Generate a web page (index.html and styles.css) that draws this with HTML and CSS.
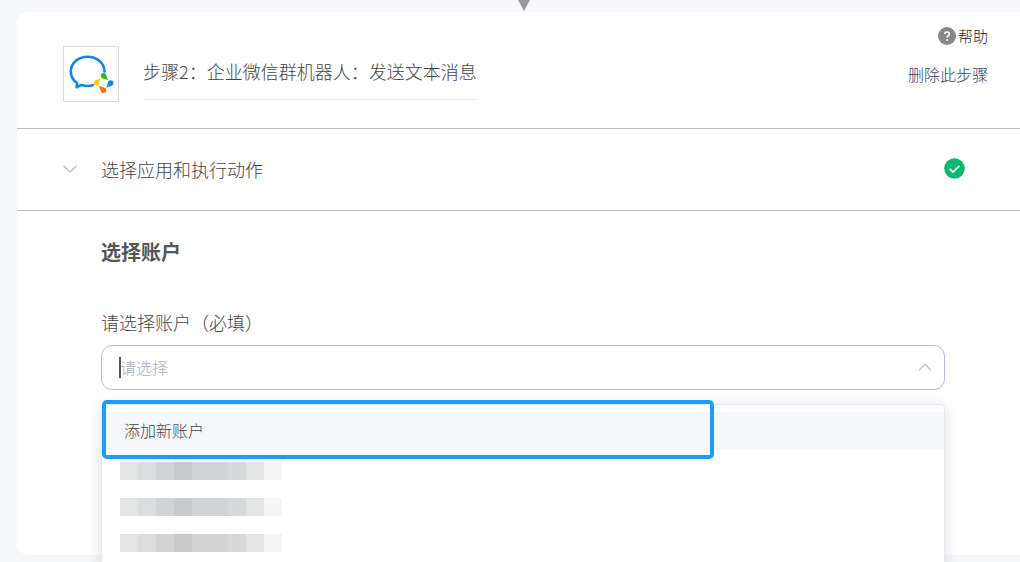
FILE: index.html
```html
<!DOCTYPE html>
<html lang="zh-CN">

<head>
    <meta charset="UTF-8">
    <meta name="viewport" content="width=device-width, initial-scale=1.0">
    <title>选择账户</title>
    <link rel="stylesheet" href="styles.css">
</head>

<body>
    <div class="connector">
        <svg width="14" height="12" viewBox="0 0 14 12">
            <path d="M0 -2H14L7 11Z" fill="#999" />
        </svg>
    </div>
    <main class="step-card">
        <header class="step-header">
            <div class="app-logo">
                <svg width="54" height="54" viewBox="0 0 54 54" fill="none">
                    <path d="M40.500 24.500C40.500 16 33 9.800 23.500 9.800C14 9.800 6.800 16.200 6.800 24.500C6.800 29.500 9.300 33.500 13.200 36.200L12.600 40.300L17.300 37.900C21 39.300 25 39.400 28.800 38.300" stroke="#0a86f0" stroke-width="2.600" stroke-linecap="round" stroke-linejoin="round" />
                    <g fill="#2bbf0b">
                        <circle cx="39.500" cy="28.800" r="2.700" />
                        <path d="M37.600 30.700L42 28L44.200 33.200Z" />
                    </g>
                    <g fill="#0a86f0">
                        <circle cx="46.700" cy="36" r="2.700" />
                        <path d="M44.800 34.100L47.500 38.500L42.300 40.700Z" />
                    </g>
                    <g fill="#ff6a0a">
                        <circle cx="39.500" cy="43.200" r="2.700" />
                        <path d="M41.400 41.300L37 44L34.800 38.800Z" />
                    </g>
                    <g fill="#ffcc05">
                        <circle cx="32.300" cy="36" r="2.700" />
                        <path d="M34.200 37.900L31.500 33.500L36.700 31.300Z" />
                    </g>
                </svg>
            </div>
            <h2 class="step-title">步骤2：企业微信群机器人：发送文本消息</h2>
            <div class="step-links">
                <a class="help" href="#">
                    <svg width="18" height="18" viewBox="0 0 18 18" fill="none">
                        <circle cx="9" cy="9" r="9" fill="#888" />
                        <path d="M6.700 7C6.700 4.200 11.400 4.300 11.400 7C11.400 8.700 9.100 8.700 9.100 10.600" stroke="#fff" stroke-width="1.600" />
                        <circle cx="9.100" cy="13" r="1" fill="#fff" />
                    </svg>帮助</a>
                <a class="delete" href="#">删除此步骤</a>
            </div>
        </header>

        <button class="section-row" type="button">
            <svg width="14" height="8" viewBox="0 0 14 8" fill="none">
                <path d="M.5 .8L7 7L13.500 .8" stroke="#b4c0d2" stroke-width="1.400" />
            </svg>
            <span class="section-name">选择应用和执行动作</span>
            <svg width="21" height="21" viewBox="0 0 21 21" fill="none">
                <circle cx="10.500" cy="10.500" r="10.300" fill="#0cb870" />
                <path d="M5.600 10.800L9 14L15.400 7.800" stroke="#fff" stroke-width="1.700" />
            </svg>
        </button>

        <section class="account">
            <h3>选择账户</h3>
            <label for="account">请选择账户（必填）</label>
            <div class="select">
                <input id="account" type="text" placeholder="请选择" role="combobox" aria-expanded="true" aria-controls="account-list">
                <svg class="arrow" width="14" height="8" viewBox="0 0 14 8" fill="none">
                    <path d="M1 7.200L7 1.200L13 7.200" stroke="#c0c4cc" stroke-width="1.400" />
                </svg>
                <ul class="dropdown" id="account-list" role="listbox">
                    <li class="option active" role="option">添加新账户</li>
                    <li class="option masked" role="option"><i></i><i></i><i></i><i></i><i></i><i></i><i></i><i></i><i></i></li>
                    <li class="option masked" role="option"><i></i><i></i><i></i><i></i><i></i><i></i><i></i><i></i><i></i></li>
                    <li class="option masked" role="option"><i></i><i></i><i></i><i></i><i></i><i></i><i></i><i></i><i></i></li>
                </ul>
                <div class="marker"></div>
            </div>
        </section>
    </main>
</body>

</html>
```
FILE: styles.css
```css
* {
    box-sizing: border-box;
}

body {
    margin: 0;
    min-height: 100vh;
    overflow: hidden;
    background-color: #f5f7fb;
    color: #444;
    font-family: "Noto Sans CJK SC", sans-serif;
    font-weight: 300;
    font-size: 18px;
    line-height: 26px;
}

h2,
h3 {
    margin: 0;
}

svg {
    display: block;
    flex: none;
}

a {
    text-decoration: none;
}

.connector {
    display: flex;
    justify-content: center;
    height: 12px;
    padding-left: 28px;
}

.step-card {
    margin-left: 17px;
    background-color: #fff;
    border-radius: 12px 0 0 12px;
}

.step-header {
    display: flex;
    align-items: flex-start;
    height: 117px;
    padding: 12px 32px 0 46px;
    border-bottom: 1px solid #bfbfbf;
}

.app-logo {
    margin-top: 22px;
    border: 1px solid #dcdcdc;
}

.step-title {
    margin: 22px auto 0 24px;
    padding: 12px 0 15px;
    border-bottom: 1px solid #ebebeb;
    font-size: 18px;
    font-weight: 300;
}

.step-links {
    display: flex;
    flex-direction: column;
    align-items: flex-end;
    gap: 14px;
    line-height: 24px;
}

.help {
    display: flex;
    align-items: center;
    gap: 2px;
    color: #222;
    font-size: 15px;
}

.delete {
    color: #34456a;
    font-size: 16px;
}

.section-row {
    display: flex;
    align-items: center;
    gap: 24px;
    width: 100%;
    height: 82px;
    padding: 0 55px 2px 46px;
    background: none;
    border: 0;
    border-bottom: 1px solid #bfbfbf;
    color: inherit;
    font: inherit;
    text-align: left;
    cursor: pointer;
}

.section-name {
    flex: 1;
}

.account {
    padding: 26px 75px 165px 84px;
}

.account h3 {
    margin-bottom: 42px;
    color: #555;
    font-size: 20px;
    font-weight: 700;
    line-height: 30px;
}

.account label {
    display: block;
    margin-bottom: 10px;
}

.select {
    position: relative;
}

.select input {
    display: block;
    width: 100%;
    height: 45px;
    padding: 0 40px 2px 18px;
    background-color: #fff;
    border: 1px solid #b9b5f0;
    border-radius: 11px;
    outline: none;
    color: #555;
    font: inherit;
    font-size: 16px;
}

.select input::placeholder {
    color: #a9aebb;
}

/* text cursor of the open field */
.select::before {
    content: "";
    position: absolute;
    top: 12px;
    left: 18px;
    width: 2px;
    height: 21px;
    background-color: #555;
}

.arrow {
    position: absolute;
    top: 18px;
    right: 13px;
}

.dropdown {
    position: absolute;
    top: 59px;
    left: 0;
    width: 100%;
    margin: 0;
    padding: 7px 0 24px;
    list-style: none;
    background-color: #fff;
    border: 1px solid #e4e7ed;
    border-radius: 4px;
    box-shadow: 0 2px 16px rgba(0, 0, 0, 0.12);
}

.option {
    display: flex;
    align-items: center;
    height: 36px;
    padding: 0 18px;
    font-size: 16px;
}

.option.active {
    height: 38px;
    margin-bottom: 3px;
    padding: 0 22px 3px;
    background-color: #f5f7fb;
}

.masked i {
    width: 18px;
    height: 18px;
    background-color: #d2d3d5;
}

.masked i:nth-child(1) {
    background-color: #e3e5e4;
}

.masked i:nth-child(2) {
    background-color: #dcddde;
}

.masked i:nth-child(4) {
    background-color: #c9cacc;
}

.masked i:nth-child(7) {
    background-color: #d7d8da;
}

.masked i:nth-child(8) {
    background-color: #e3e5e4;
}

.masked i:nth-child(9) {
    background-color: #f5f5f5;
}

.marker {
    position: absolute;
    top: 55px;
    left: 1px;
    width: calc(73% - 4px);
    height: 59px;
    border: 4px solid #1b9dff;
    border-radius: 5px;
    pointer-events: none;
}
```
